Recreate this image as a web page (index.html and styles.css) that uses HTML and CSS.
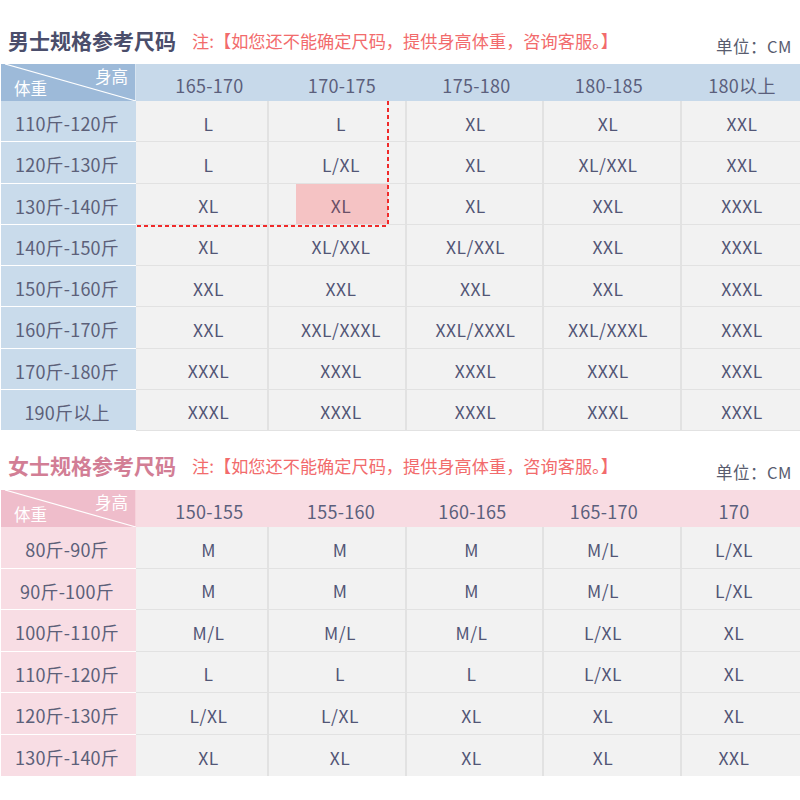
FILE: index.html
```html
<!DOCTYPE html>
<html lang="zh">
<head>
<meta charset="utf-8">
<title>尺码表</title>
<link rel="stylesheet" href="styles.css">
</head>
<body>
<section class="block men">
  <div class="head">
    <h2 class="title">男士规格参考尺码</h2>
    <p class="note">注:【如您还不能确定尺码，提供身高体重，咨询客服。】</p>
    <p class="unit">单位：CM</p>
  </div>
  <div class="table">
    <div class="row hrow">
      <div class="corner">
        <svg class="diag" width="135" height="37" viewBox="0 0 135 37"><line x1="4" y1="0" x2="135" y2="37" stroke="#fff" stroke-width="1.2"/></svg>
        <span class="c-top">身高</span><span class="c-bot">体重</span>
      </div>
      <div class="hc">165-170</div><div class="hc">170-175</div><div class="hc">175-180</div><div class="hc">180-185</div><div class="hc">180以上</div>
    </div>
    <div class="row"><div class="fc">110斤-120斤</div><div class="dc">L</div><div class="dc">L</div><div class="dc">XL</div><div class="dc">XL</div><div class="dc">XXL</div></div>
    <div class="row"><div class="fc">120斤-130斤</div><div class="dc">L</div><div class="dc">L/XL</div><div class="dc">XL</div><div class="dc">XL/XXL</div><div class="dc">XXL</div></div>
    <div class="row"><div class="fc">130斤-140斤</div><div class="dc">XL</div><div class="dc hl"><span>XL</span></div><div class="dc">XL</div><div class="dc">XXL</div><div class="dc">XXXL</div></div>
    <div class="row"><div class="fc">140斤-150斤</div><div class="dc">XL</div><div class="dc">XL/XXL</div><div class="dc">XL/XXL</div><div class="dc">XXL</div><div class="dc">XXXL</div></div>
    <div class="row"><div class="fc">150斤-160斤</div><div class="dc">XXL</div><div class="dc">XXL</div><div class="dc">XXL</div><div class="dc">XXL</div><div class="dc">XXXL</div></div>
    <div class="row"><div class="fc">160斤-170斤</div><div class="dc">XXL</div><div class="dc">XXL/XXXL</div><div class="dc">XXL/XXXL</div><div class="dc">XXL/XXXL</div><div class="dc">XXXL</div></div>
    <div class="row"><div class="fc">170斤-180斤</div><div class="dc">XXXL</div><div class="dc">XXXL</div><div class="dc">XXXL</div><div class="dc">XXXL</div><div class="dc">XXXL</div></div>
    <div class="row"><div class="fc">190斤以上</div><div class="dc">XXXL</div><div class="dc">XXXL</div><div class="dc">XXXL</div><div class="dc">XXXL</div><div class="dc">XXXL</div></div>
    <div class="dash-v"></div>
    <div class="dash-h"></div>
  </div>
</section>
<section class="block women">
  <div class="head">
    <h2 class="title">女士规格参考尺码</h2>
    <p class="note">注:【如您还不能确定尺码，提供身高体重，咨询客服。】</p>
    <p class="unit">单位：CM</p>
  </div>
  <div class="table">
    <div class="row hrow">
      <div class="corner">
        <svg class="diag" width="135" height="37" viewBox="0 0 135 37"><line x1="4" y1="0" x2="135" y2="37" stroke="#fff" stroke-width="1.2"/></svg>
        <span class="c-top">身高</span><span class="c-bot">体重</span>
      </div>
      <div class="hc">150-155</div><div class="hc">155-160</div><div class="hc">160-165</div><div class="hc">165-170</div><div class="hc">170</div>
    </div>
    <div class="row"><div class="fc">80斤-90斤</div><div class="dc">M</div><div class="dc">M</div><div class="dc">M</div><div class="dc">M/L</div><div class="dc">L/XL</div></div>
    <div class="row"><div class="fc">90斤-100斤</div><div class="dc">M</div><div class="dc">M</div><div class="dc">M</div><div class="dc">M/L</div><div class="dc">L/XL</div></div>
    <div class="row"><div class="fc">100斤-110斤</div><div class="dc">M/L</div><div class="dc">M/L</div><div class="dc">M/L</div><div class="dc">L/XL</div><div class="dc">XL</div></div>
    <div class="row"><div class="fc">110斤-120斤</div><div class="dc">L</div><div class="dc">L</div><div class="dc">L</div><div class="dc">L/XL</div><div class="dc">XL</div></div>
    <div class="row"><div class="fc">120斤-130斤</div><div class="dc">L/XL</div><div class="dc">L/XL</div><div class="dc">XL</div><div class="dc">XL</div><div class="dc">XL</div></div>
    <div class="row"><div class="fc">130斤-140斤</div><div class="dc">XL</div><div class="dc">XL</div><div class="dc">XL</div><div class="dc">XL</div><div class="dc">XXL</div></div>
  </div>
</section>
</body>
</html>
```

FILE: styles.css
```css
* { box-sizing: border-box; margin: 0; padding: 0; }
html, body { background: #fff; }
body {
  width: 800px;
  font-family: "Noto Sans CJK SC", "Noto Sans", sans-serif;
  color: #555a78;
}
.head {
  display: flex;
  align-items: flex-start;
  height: 64px;
  padding-left: 8px;
  padding-right: 8px;
}
.women .head { height: 59px; }
.title {
  font-size: 21px;
  line-height: 24px;
  font-weight: 700;
  margin-top: 28px;
  color: #4b4e6b;
}
.women .title { margin-top: 22px; color: #d27e95; }
.note {
  font-size: 17.2px;
  line-height: 20px;
  color: #f26b6c;
  margin-top: 31px;
  margin-left: 16px;
}
.women .note { margin-top: 25px; }
.unit {
  margin-left: auto;
  font-size: 16.5px;
  line-height: 18px;
  color: #595c6e;
  margin-top: 37px;
  letter-spacing: 0.5px;
}
.women .unit { margin-top: 32px; }
.table {
  position: relative;
  margin-left: 1px;
}
.row {
  display: grid;
  grid-template-columns: 135px 133px 138px 137px 138px 1fr;
  height: 41.25px;
}
.women .row { height: 41.5px; }
.row.hrow { height: 37px; }
.women .row.hrow { height: 37px; }
.hrow { background: #c7d9ea; }
.women .hrow { background: #f8dbe2; }
.corner {
  position: relative;
  background: #9dbad9;
  color: #fff;
  font-size: 16.5px;
  border-right: 1px solid #d7e4f0;
}
.women .corner { background: #efbdcb; border-right-color: #f6d2db; }
.diag { position: absolute; left: 0; top: 0; }
.c-top { position: absolute; right: 7px; top: 1px; line-height: 22px; }
.c-bot { position: absolute; left: 13px; top: 13px; line-height: 22px; }
.hc {
  display: flex;
  align-items: center;
  justify-content: center;
  font-size: 18px;
  letter-spacing: 0.3px;
  color: #5b5f7c;
  padding-top: 4px;
}
.fc {
  display: flex;
  align-items: center;
  justify-content: center;
  background: #c9dbeb;
  border-bottom: 1.5px solid #fff;
  font-size: 18px;
  letter-spacing: 0.2px;
  color: #5c6079;
  padding-top: 4px;
  padding-right: 3px;
}
.women .fc { background: #f8dde4; }
.dc {
  display: flex;
  align-items: center;
  justify-content: center;
  background: #f2f2f2;
  border-right: 2px solid #e2e2e2;
  border-bottom: 1.5px solid #e2e2e2;
  font-size: 17.5px;
  color: #525676;
  letter-spacing: 0.5px;
  padding-top: 4px;
}
.dc:last-child { border-right: none; }
.row:last-of-type .dc, .row:last-of-type .fc { border-bottom: none; }

/* text offsets inside columns */
.men .row > :nth-child(2) { padding-left: 14px; }
.men .row > :nth-child(3) { padding-left: 8px; }
.men .row > :nth-child(4) { padding-left: 2px; }
.men .row > :nth-child(5) { padding-right: 8px; }
.men .row > :nth-child(6) { padding-left: 2px; }
.women .row > :nth-child(2) { padding-left: 14px; }
.women .row > :nth-child(3) { padding-left: 6px; }
.women .row > :nth-child(4) { padding-right: 6px; }
.women .row > :nth-child(5) { padding-right: 18px; }
.women .row > :nth-child(6) { padding-right: 14px; }

.hl { position: relative; }
.hl::before {
  content: "";
  position: absolute;
  left: 27px;
  right: 17px;
  top: 0;
  bottom: 0;
  background: #f5c3c4;
}
.hl span { position: relative; color: #6a5068; }
.dash-v {
  position: absolute;
  left: 386px;
  top: 37px;
  width: 2px;
  height: 125px;
  background: repeating-linear-gradient(to bottom, #f02a2a 0 4px, transparent 4px 7px);
}
.dash-h {
  position: absolute;
  left: 136px;
  top: 161px;
  width: 252px;
  height: 2px;
  background: repeating-linear-gradient(to right, #f02a2a 0 4px, transparent 4px 7px);
}
```
